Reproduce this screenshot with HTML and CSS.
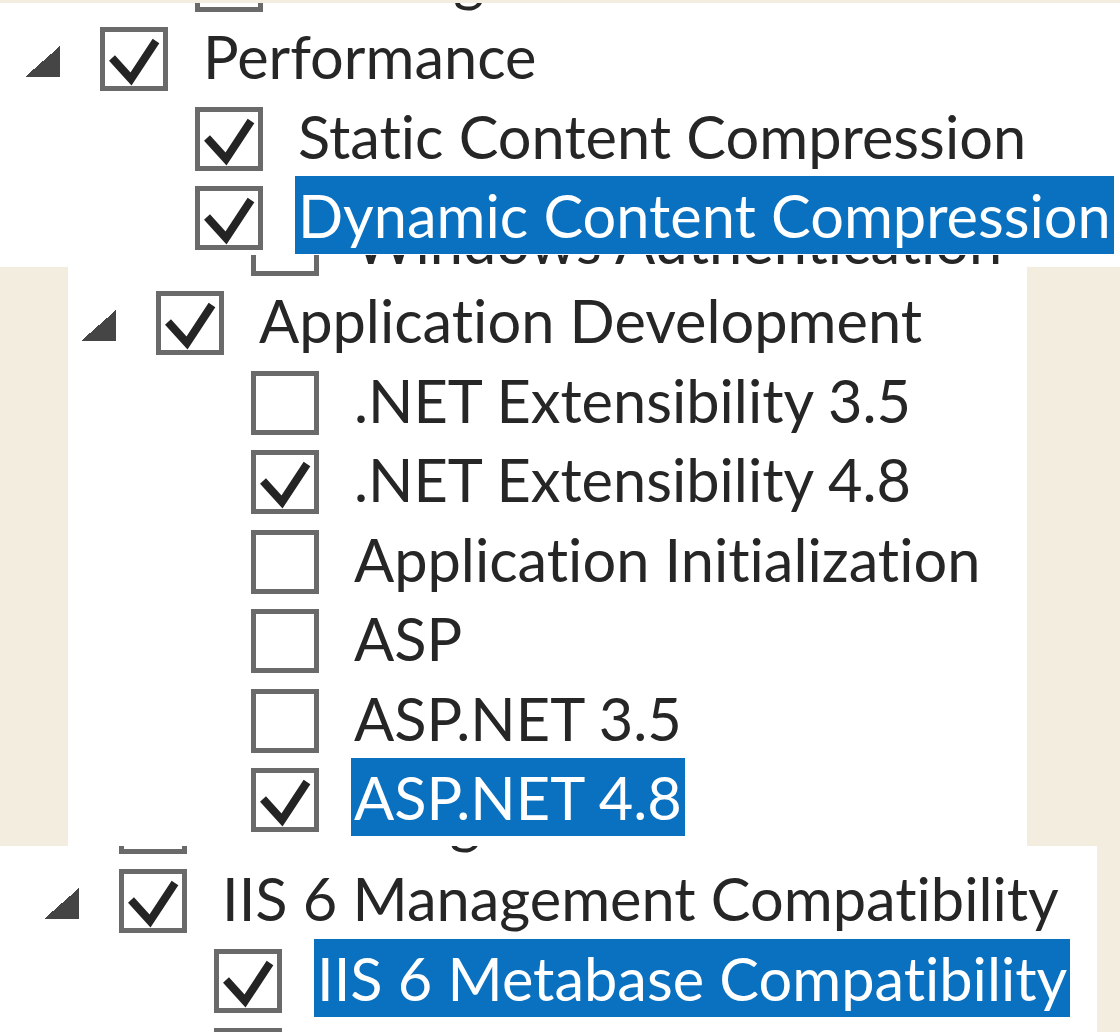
FILE: index.html
```html
<!DOCTYPE html>
<html>
<head>
<meta charset="utf-8">
<link rel="stylesheet" href="styles.css">
</head>
<body>
<div class="panel p1">
  <div class="tree">
    <div class="row child"><span class="tog"></span><span class="cb"></span><span class="lbl">Tracing</span></div>
    <div class="row parent"><span class="tog open"></span><span class="cb on"></span><span class="lbl">Performance</span></div>
    <div class="row child"><span class="tog"></span><span class="cb on"></span><span class="lbl">Static Content Compression</span></div>
    <div class="row child"><span class="tog"></span><span class="cb on"></span><span class="lbl sel">Dynamic Content Compression</span></div>
  </div>
</div>
<div class="panel p2">
  <div class="tree">
    <div class="row child"><span class="tog"></span><span class="cb"></span><span class="lbl">Windows Authentication</span></div>
    <div class="row parent"><span class="tog open"></span><span class="cb on"></span><span class="lbl">Application Development</span></div>
    <div class="row child"><span class="tog"></span><span class="cb"></span><span class="lbl">.NET Extensibility 3.5</span></div>
    <div class="row child"><span class="tog"></span><span class="cb on"></span><span class="lbl">.NET Extensibility 4.8</span></div>
    <div class="row child"><span class="tog"></span><span class="cb"></span><span class="lbl">Application Initialization</span></div>
    <div class="row child"><span class="tog"></span><span class="cb"></span><span class="lbl">ASP</span></div>
    <div class="row child"><span class="tog"></span><span class="cb"></span><span class="lbl">ASP.NET 3.5</span></div>
    <div class="row child"><span class="tog"></span><span class="cb on"></span><span class="lbl sel">ASP.NET 4.8</span></div>
  </div>
</div>
<div class="panel p3">
  <div class="tree">
    <div class="row parent"><span class="tog"></span><span class="cb"></span><span class="lbl">IIS Management Service</span></div>
    <div class="row parent"><span class="tog open"></span><span class="cb on"></span><span class="lbl">IIS 6 Management Compatibility</span></div>
    <div class="row child"><span class="tog"></span><span class="cb on"></span><span class="lbl sel">IIS 6 Metabase Compatibility</span></div>
    <div class="row child"><span class="tog"></span><span class="cb"></span><span class="lbl">IIS 6 Scripting Tools</span></div>
  </div>
</div>
</body>
</html>
```
FILE: styles.css
```css
html, body {
  margin: 0;
  padding: 0;
}
body {
  background: #f3ede0;
  width: 1120px;
  height: 1032px;
  overflow: hidden;
  font-family: Lato, "Open Sans", sans-serif;
  font-variant-ligatures: none;
  font-feature-settings: "liga" 0, "clig" 0, "dlig" 0;
}
.panel {
  background: #ffffff;
  overflow: hidden;
  position: relative;
}
.p1 {
  margin-top: 3px;
  width: 1120px;
  height: 264px;
}
.p2 {
  margin-top: -12px;
  margin-left: 68px;
  width: 959px;
  height: 591px;
  z-index: 1;
}
.p3 {
  width: 1097px;
  height: 186px;
  z-index: 2;
}
.tree {
  filter: blur(0.5px);
}
.p1 .tree { margin-top: -63px; padding-left: 25px; }
.p2 .tree { margin-top: -51px; padding-left: 13px; }
.p3 .tree { margin-top: -64px; padding-left: 44px; }

.row {
  height: 79.5px;
  display: flex;
  align-items: center;
}
.row.child { padding-left: 95px; }
.tog {
  width: 35px;
  height: 31px;
  margin-right: 40px;
  flex: none;
  position: relative;
  top: 2px;
}
.tog.open {
  background: linear-gradient(to bottom right, transparent 50%, #454545 50%);
}
.cb {
  width: 58px;
  height: 54px;
  border: 5px solid #6a6a6a;
  flex: none;
  background: #fff center / 68px 64px no-repeat;
}
.cb.on {
  background-image: url("data:image/svg+xml;utf8,<svg xmlns='http://www.w3.org/2000/svg' width='68' height='64' viewBox='0 0 68 64'><path d='M12 31 L31 52 L56 14' fill='none' stroke='%23242424' stroke-width='8' stroke-linejoin='miter'/></svg>");
  background-position: -5px -5px;
}
.lbl {
  margin-left: 32px;
  padding: 0 3px;
  height: 78px;
  line-height: 78px;
  margin-bottom: 6px;
  font-size: 59.5px;
  color: #262626;
  white-space: nowrap;
}
.lbl.sel {
  background: #0a71c1;
  color: #ffffff;
}
```
